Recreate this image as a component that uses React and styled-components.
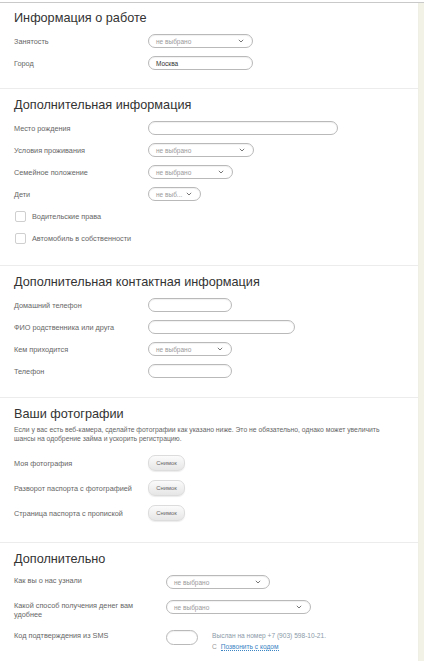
import React from "react";
import styled, { createGlobalStyle } from "styled-components";

const GlobalStyle = createGlobalStyle`
  html, body {
    margin: 0;
    padding: 0;
    background: #ffffff;
  }
  body {
    font-family: "Liberation Sans", Arial, sans-serif;
    color: #444;
  }
`;

const Page = styled.div`
  width: 424px;
  height: 661px;
  overflow: hidden;
  padding-top: 2px;
  box-sizing: border-box;
`;

const Frame = styled.div`
  display: flex;
  border-top: 1px solid #c9c9c9;
  height: 100%;
`;

const Panel = styled.div`
  flex: 1;
  background: #fff;
`;

const SideStrip = styled.div`
  width: 5px;
  background: #f3f2e6;
  border-left: 1px solid #f0efe6;
`;

const Section = styled.section`
  padding: ${(p) => (p.$first ? "7px" : "8px")} 14px ${(p) => p.$bottom || 19}px;
  border-bottom: 1px solid #ececec;
`;

const Title = styled.h2`
  margin: 0 0 8px;
  font-size: 12.7px;
  line-height: 16px;
  font-weight: normal;
  color: #333;
`;

const Note = styled.p`
  margin: -5px 0 12px;
  font-size: 6.8px;
  line-height: 9px;
  color: #666;
  max-width: 376px;
`;

const Rows = styled.div`
  display: flex;
  flex-direction: column;
  gap: ${(p) => p.$gap || 8}px;
`;

const Row = styled.div`
  display: grid;
  grid-template-columns: ${(p) => p.$label || 134}px 1fr;
  align-items: ${(p) => (p.$top ? "start" : "center")};
  min-height: 14px;
`;

const Label = styled.span`
  font-size: 7.3px;
  line-height: 9px;
  color: #666;
  padding-top: ${(p) => (p.$top ? "1px" : "0")};
  max-width: 124px;
`;

const Field = styled.div`
  box-sizing: border-box;
  width: ${(p) => p.$w}px;
  height: ${(p) => p.$h || 14}px;
  border: 1px solid #b9b9b9;
  border-radius: 8px;
  box-shadow: inset 0 1px 1px rgba(0, 0, 0, 0.06);
  display: flex;
  align-items: center;
  justify-content: space-between;
  padding: 0 8px 0 7px;
  font-size: 6.5px;
  color: ${(p) => (p.$placeholder ? "#9a9a9a" : "#333")};
  background: #fff;
`;

const Chevron = () => (
  <svg width="6" height="4" viewBox="0 0 6 4">
    <path d="M0.8 0.8 L3 3 L5.2 0.8" fill="none" stroke="#777" strokeWidth="1" />
  </svg>
);

const Select = ({ w, text = "не выбрано" }) => (
  <Field $w={w} $placeholder>
    <span>{text}</span>
    <Chevron />
  </Field>
);

const CheckRow = styled.label`
  display: flex;
  align-items: center;
  gap: 6px;
  font-size: 7.3px;
  color: #666;
  height: 14px;
`;

const Box = styled.span`
  box-sizing: border-box;
  width: 11px;
  height: 11px;
  border: 1px solid #cfcfcf;
  border-radius: 2px;
  background: #fff;
  margin-left: 1px;
`;

const ShotButton = styled.button`
  width: 37px;
  height: 16px;
  border: 1px solid #dcdcdc;
  border-radius: 7px;
  background: linear-gradient(#fbfbfb, #e6e6e6);
  box-shadow: 0 1px 1px rgba(0, 0, 0, 0.08);
  font-family: inherit;
  font-size: 5.8px;
  color: #666;
  padding: 0;
`;

const SmsLine = styled.div`
  display: flex;
  align-items: flex-start;
  gap: 14px;
`;

const SmsInfo = styled.div`
  font-size: 6.6px;
  line-height: 11px;
  color: #8a9aa8;
`;

const Muted = styled.span`
  color: #999;
`;

const CallLink = styled.a`
  color: #3b84c4;
  text-decoration: none;
  border-bottom: 1px dotted #3b84c4;
  margin-left: 4px;
`;

export default function App() {
  return (
    <>
      <GlobalStyle />
      <Page>
        <Frame>
          <Panel>
            <Section $first $bottom={18}>
              <Title>Информация о работе</Title>
              <Rows>
                <Row>
                  <Label>Занятость</Label>
                  <Select w={105} />
                </Row>
                <Row>
                  <Label>Город</Label>
                  <Field $w={105}>Москва</Field>
                </Row>
              </Rows>
            </Section>

            <Section $bottom={20}>
              <Title>Дополнительная информация</Title>
              <Rows>
                <Row>
                  <Label>Место рождения</Label>
                  <Field $w={190} />
                </Row>
                <Row>
                  <Label>Условия проживания</Label>
                  <Select w={106} />
                </Row>
                <Row>
                  <Label>Семейное положение</Label>
                  <Select w={85} />
                </Row>
                <Row>
                  <Label>Дети</Label>
                  <Select w={53} text="не выб..." />
                </Row>
                <CheckRow>
                  <Box />
                  Водительские права
                </CheckRow>
                <CheckRow>
                  <Box />
                  Автомобиль в собственности
                </CheckRow>
              </Rows>
            </Section>

            <Section $bottom={19}>
              <Title>Дополнительная контактная информация</Title>
              <Rows>
                <Row>
                  <Label>Домашний телефон</Label>
                  <Field $w={84} />
                </Row>
                <Row>
                  <Label>ФИО родственника или друга</Label>
                  <Field $w={147} />
                </Row>
                <Row>
                  <Label>Кем приходится</Label>
                  <Select w={84} />
                </Row>
                <Row>
                  <Label>Телефон</Label>
                  <Field $w={84} />
                </Row>
              </Rows>
            </Section>

            <Section $bottom={21}>
              <Title>Ваши фотографии</Title>
              <Note>
                Если у вас есть веб-камера, сделайте фотографии как указано ниже. Это не
                обязательно, однако может увеличить шансы на одобрение займа и ускорить
                регистрацию.
              </Note>
              <Rows $gap={9}>
                <Row>
                  <Label>Моя фотография</Label>
                  <ShotButton>Снимок</ShotButton>
                </Row>
                <Row>
                  <Label>Разворот паспорта с фотографией</Label>
                  <ShotButton>Снимок</ShotButton>
                </Row>
                <Row>
                  <Label>Страница паспорта с пропиской</Label>
                  <ShotButton>Снимок</ShotButton>
                </Row>
              </Rows>
            </Section>

            <Section $bottom={20}>
              <Title>Дополнительно</Title>
              <Rows $gap={11}>
                <Row $label={152} $top>
                  <Label $top>Как вы о нас узнали</Label>
                  <Select w={104} />
                </Row>
                <Row $label={152} $top>
                  <Label $top>Какой способ получения денег вам удобнее</Label>
                  <Select w={145} />
                </Row>
                <Row $label={152} $top>
                  <Label $top>Код подтверждения из SMS</Label>
                  <SmsLine>
                    <Field $w={32} $h={15} />
                    <SmsInfo>
                      Выслан на номер +7 (903) 598-10-21.
                      <br />
                      <Muted>С</Muted>
                      <CallLink href="#">Позвонить с кодом</CallLink>
                    </SmsInfo>
                  </SmsLine>
                </Row>
              </Rows>
            </Section>
          </Panel>
          <SideStrip />
        </Frame>
      </Page>
    </>
  );
}
